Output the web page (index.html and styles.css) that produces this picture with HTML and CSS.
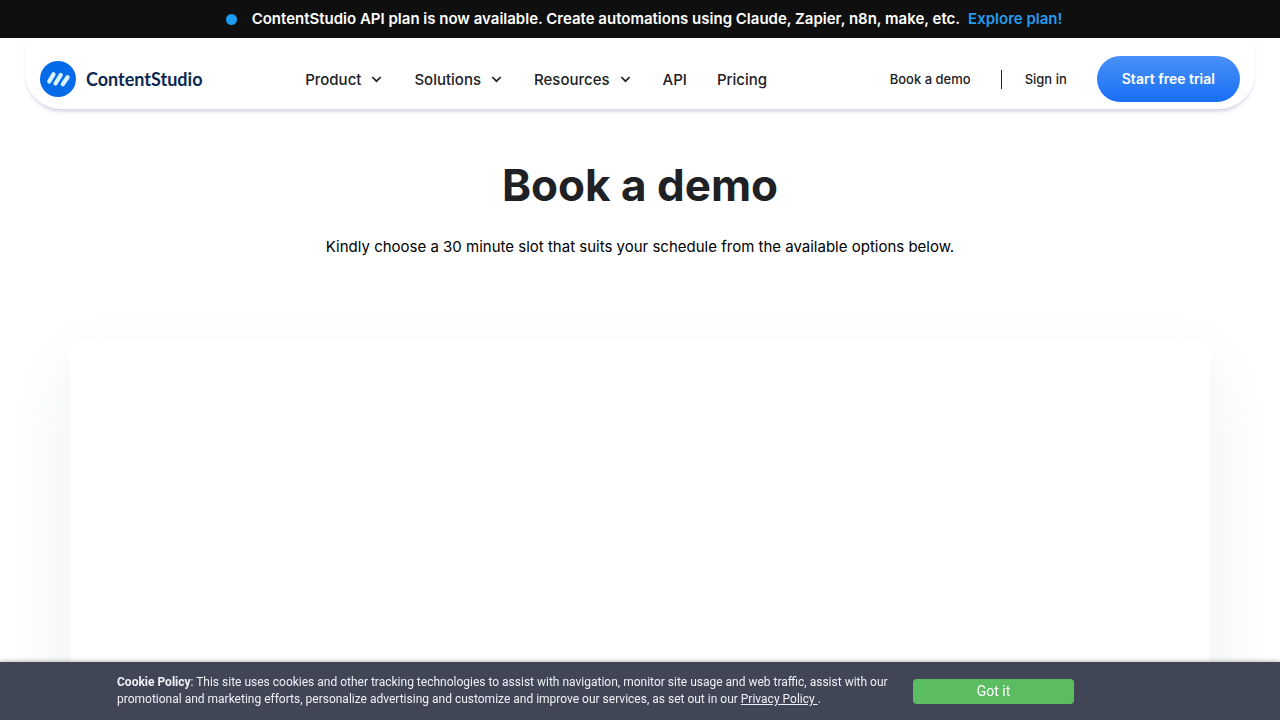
FILE: index.html
```html
<!DOCTYPE html>
<html lang="en">
<head>
  <meta charset="UTF-8" />
  <meta name="viewport" content="width=device-width, initial-scale=1" />
  <title>Book a demo - ContentStudio</title>
  <link rel="stylesheet" href="styles.css">
</head>
<body>
  <div class="promo">
    <span class="promo-dot"></span>
    <p>ContentStudio API plan is now available. Create automations using Claude, Zapier, n8n, make, etc.</p>
    <a href="#">Explore plan!</a>
  </div>

  <header class="header">
    <a class="logo" href="#">
      <svg width="36" height="36" viewBox="0 0 36 36" aria-hidden="true">
        <circle cx="18" cy="18" r="18" fill="#066be8" />
        <g stroke="#d9f3ff" stroke-width="4.200" stroke-linecap="round">
          <path d="M9.200 20.500L13.500 13.300" />
          <path d="M15.500 22.500L20.800 14" />
          <path d="M22.800 23.300L27.600 16.300" />
        </g>
      </svg>
      <span>ContentStudio</span>
    </a>

    <nav class="nav">
      <button type="button">Product
        <svg width="11" height="7" viewBox="0 0 11 7" aria-hidden="true"><path d="M1.300 1L5.500 5.200L9.700 1" /></svg>
      </button>
      <button type="button">Solutions
        <svg width="11" height="7" viewBox="0 0 11 7" aria-hidden="true"><path d="M1.300 1L5.500 5.200L9.700 1" /></svg>
      </button>
      <button type="button">Resources
        <svg width="11" height="7" viewBox="0 0 11 7" aria-hidden="true"><path d="M1.300 1L5.500 5.200L9.700 1" /></svg>
      </button>
      <a href="#">API</a>
      <a href="#">Pricing</a>
    </nav>

    <div class="actions">
      <a class="demo-link" href="#">Book a demo</a>
      <a class="signin-link" href="#">Sign in</a>
      <a class="trial-btn" href="#">Start free trial</a>
    </div>
  </header>

  <main>
    <section class="intro">
      <h1>Book a demo</h1>
      <p>Kindly choose a 30 minute slot that suits your schedule from the available options below.</p>
    </section>
    <section class="calendar" aria-label="Calendar"></section>
  </main>

  <div class="cookie-bar">
    <p><strong>Cookie Policy</strong>: This site uses cookies and other tracking technologies to assist with navigation, monitor site usage and web traffic, assist with our promotional and marketing efforts, personalize advertising and customize and improve our services, as set out in our <a href="#">Privacy Policy </a>.</p>
    <button type="button">Got it</button>
  </div>
</body>
</html>
```

FILE: styles.css
```css
* {
  box-sizing: border-box;
}

html, body {
  height: 100%;
  margin: 0;
}

body {
  font-family: Inter, "Liberation Sans", sans-serif;
  color: #202124;
  background: #fff;
  display: flex;
  flex-direction: column;
}

h1, p {
  margin: 0;
}

a {
  color: inherit;
  text-decoration: none;
}

button {
  font: inherit;
  color: inherit;
  border: none;
  padding: 0;
  background: none;
  cursor: pointer;
}

/* promo strip */
.promo {
  flex: none;
  display: flex;
  justify-content: center;
  align-items: center;
  gap: 8px;
  padding: 8px 0 8px 8px;
  background: #0f0f0f;
  color: #fff;
  font-size: 15px;
  line-height: 22px;
  font-weight: 600;
}

.promo-dot {
  width: 11px;
  height: 11px;
  margin-right: 7px;
  border-radius: 50%;
  background: #1d9bf0;
}

.promo a {
  color: #269bec;
}

/* header */
.header {
  flex: none;
  display: flex;
  align-items: center;
  justify-content: space-between;
  margin: 0 25px;
  padding: 18px 15px 7px;
  border-radius: 0 0 36px 36px;
  background: #fff;
  box-shadow: 0 4px 4px -2px rgba(60, 50, 130, 0.25);
}

.logo {
  display: flex;
  align-items: center;
  gap: 10px;
  color: #0b2853;
  font-family: Lato, sans-serif;
  font-size: 18px;
  font-weight: 700;
}

.nav {
  display: flex;
  align-items: center;
  gap: 30px;
  margin-right: 20px;
  font-size: 15px;
  font-weight: 500;
}

.nav button {
  display: flex;
  align-items: center;
  gap: 10px;
  margin-right: 2px;
}

.nav svg {
  fill: none;
  stroke: #202124;
  stroke-width: 1.7;
}

.actions {
  display: flex;
  align-items: center;
  font-size: 13px;
  font-weight: 500;
}

.demo-link {
  padding-right: 30px;
  border-right: 1px solid #202124;
  line-height: 19px;
}

.signin-link {
  padding: 0 30px 0 23px;
}

.trial-btn {
  padding: 0 25px;
  border-radius: 23px;
  background: linear-gradient(#4a91f7, #186ff5);
  color: #fff;
  font-size: 14px;
  line-height: 46px;
  font-weight: 600;
}

/* page content */
main {
  flex: 1;
  display: flex;
  flex-direction: column;
}

.intro {
  padding: 49px 20px 81px;
  text-align: center;
}

.intro h1 {
  margin-bottom: 23px;
  font-size: 44px;
  line-height: 54px;
  font-weight: 700;
}

.intro p {
  color: #000;
  font-size: 15px;
  line-height: 24px;
}

.calendar {
  flex: 1;
  width: calc(100% - 140px);
  max-width: 1140px;
  margin: 0 auto;
  border-radius: 10px 10px 0 0;
  background: #fff;
  box-shadow: 0 24px 60px rgba(50, 80, 90, 0.09);
}

/* cookie notice */
.cookie-bar {
  position: fixed;
  left: 0;
  right: 0;
  bottom: 0;
  display: flex;
  justify-content: center;
  align-items: center;
  gap: 16px;
  padding: 12px 206px 12px 117px;
  background: #404656;
  box-shadow: 0 0 5px rgba(0, 0, 0, 0.4);
  color: #f0f0f5;
  font-family: Roboto, "Noto Sans", sans-serif;
  font-size: 12px;
  line-height: 17px;
}

.cookie-bar p {
  flex: 1;
}

.cookie-bar a {
  text-decoration: underline;
}

.cookie-bar button {
  width: 161px;
  border-radius: 4px;
  background: #5cbc61;
  color: #fff;
  font-family: Roboto, sans-serif;
  font-size: 14px;
  line-height: 25px;
}
```
